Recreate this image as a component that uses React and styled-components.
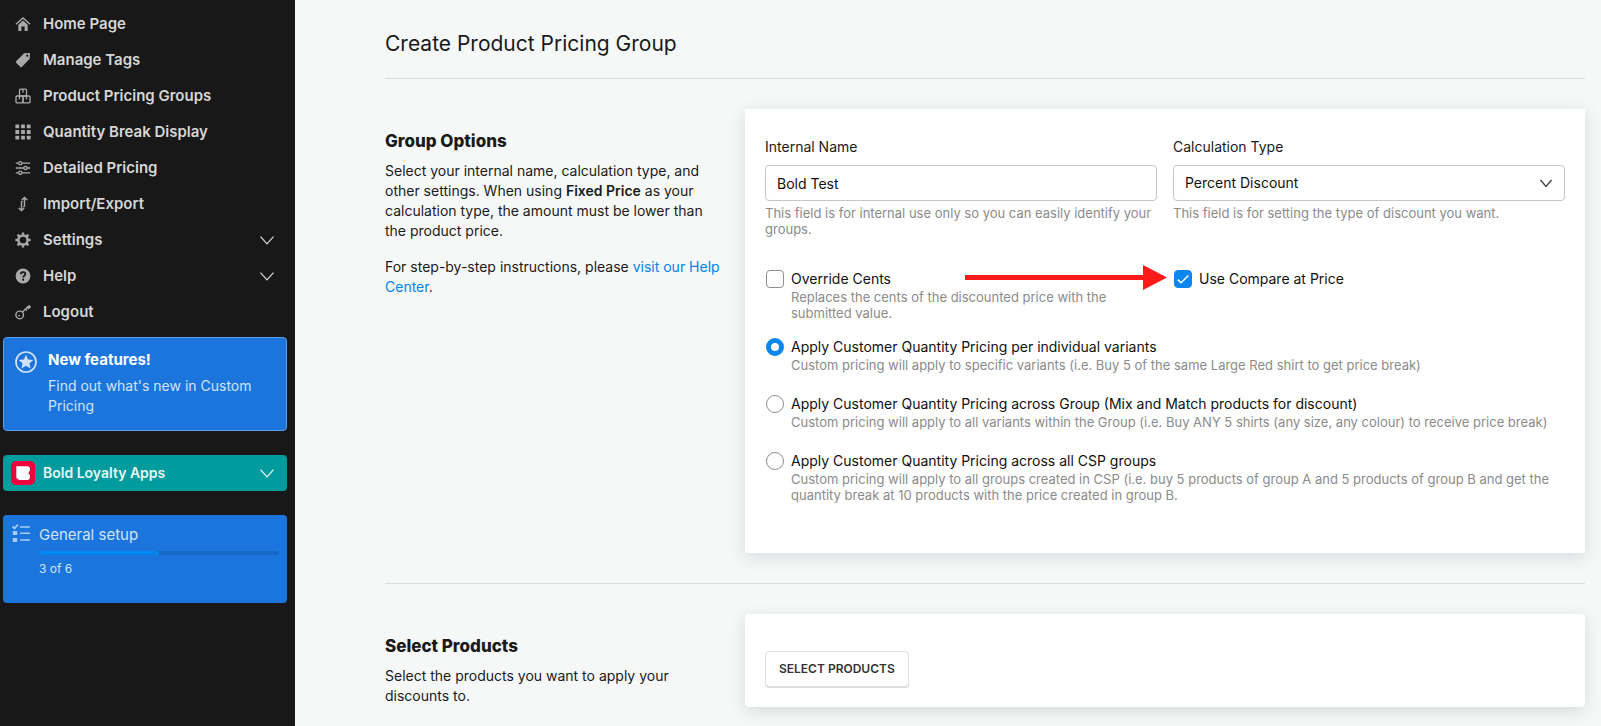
import React, { useState } from "react";
import styled, { createGlobalStyle } from "styled-components";

const GlobalStyle = createGlobalStyle`
  *, *::before, *::after { box-sizing: border-box; }
  body {
    margin: 0;
    background: #f6f8f8;
    color: #1a1a1a;
    font-family: Inter, "Liberation Sans", sans-serif;
    font-size: 14px;
    line-height: 20px;
  }
  h1, h2, p, ul { margin: 0; padding: 0; }
  button, input, select { font: inherit; color: inherit; }
`;

const Page = styled.div`
  display: flex;
  min-height: 100vh;
`;

/* Sidebar */

const Sidebar = styled.aside`
  flex: 0 0 295px;
  padding: 6px 8px 24px 3px;
  background: #181818;
`;

const NavList = styled.ul`
  list-style: none;
`;

const navRow = `
  display: flex;
  align-items: center;
  gap: 12px;
  width: 100%;
  height: 36px;
  padding: 0 13px 0 12px;
  border: 0;
  background: none;
  color: #d6d6d6;
  font-size: 15px;
  font-weight: 600;
  text-align: left;
  text-decoration: none;
  cursor: pointer;
`;

const NavLink = styled.a`${navRow}`;
const NavToggle = styled.button`${navRow}`;

const NavIcon = styled.svg`
  flex: none;
  width: 16px;
  height: 16px;
  fill: none;
  stroke: #a9a9a9;
  color: #a9a9a9;
`;

const ToggleLabel = styled.span`
  flex: 1;
`;

const ChevronSvg = styled.svg`
  flex: none;
  width: 14px;
  height: 9px;
  fill: none;
  stroke: currentColor;
`;

const Promo = styled.a`
  display: flex;
  gap: 11px;
  margin-top: 7px;
  padding: 12px 8px 14px 11px;
  border: 1px solid #5a9ce8;
  border-radius: 4px;
  background: #1b75dc;
  color: #d1e3f8;
  text-decoration: none;
`;

const PromoIcon = styled.svg`
  flex: none;
  width: 22px;
  height: 22px;
  margin-top: 1px;
`;

const PromoTitle = styled.strong`
  display: block;
  margin-bottom: 6px;
  color: #fff;
  font-size: 15px;
  font-weight: 700;
`;

const AppsToggle = styled.button`
  display: flex;
  align-items: center;
  gap: 8px;
  width: 100%;
  height: 36px;
  margin-top: 24px;
  padding: 0 13px 0 8px;
  border: 0;
  border-radius: 4px;
  background: #009b9c;
  color: #e8f6f6;
  font-size: 14px;
  font-weight: 600;
  text-align: left;
  cursor: pointer;
`;

const BoldLogo = styled.svg`
  flex: none;
  width: 24px;
  height: 24px;
`;

const Setup = styled.section`
  display: flex;
  gap: 9px;
  min-height: 88px;
  margin-top: 24px;
  padding: 8px 8px 8px 9px;
  border-radius: 4px;
  background: #1b75dc;
  color: #d1e3f8;
`;

const SetupIcon = styled.svg`
  flex: none;
  width: 18px;
  height: 20px;
`;

const SetupBody = styled.div`
  flex: 1;
  padding-top: 2px;
`;

const SetupTitle = styled.h2`
  font-size: 15px;
  font-weight: 400;
  line-height: 20px;
`;

const Track = styled.div`
  height: 4px;
  margin: 6px 0 4px;
  border-radius: 2px;
  background: #1668c4;
`;

const Fill = styled.div`
  height: 100%;
  border-radius: 2px;
  background: #0088f0;
`;

const SetupCount = styled.p`
  font-size: 12px;
`;

/* Main content */

const Main = styled.main`
  flex: 1;
  min-width: 0;
  padding: 0 16px 0 90px;
`;

const Header = styled.header`
  padding: 28px 0 18px;
`;

const Title = styled.h1`
  font-size: 21px;
  font-weight: 400;
  line-height: 32px;
`;

const Section = styled.section`
  display: grid;
  grid-template-columns: 3fr 7fr;
  align-items: start;
  padding: 30px 0;
  border-top: 1px solid #dcdfdf;
`;

const Intro = styled.div`
  display: grid;
  gap: 16px;
  padding: 20px 20px 0 0;
`;

const SectionTitle = styled.h2`
  margin-bottom: -8px;
  font-size: 17px;
  font-weight: 800;
  line-height: 24px;
`;

const Strong = styled.strong`
  font-weight: 600;
`;

const HelpLink = styled.a`
  color: #0084e8;
  text-decoration: none;
`;

const Card = styled.div`
  padding: ${(p) => (p.$compact ? "37px 20px 20px" : "28px 20px 50px")};
  border-radius: ${(p) => (p.$compact ? "4px" : "0")};
  background: #fff;
  box-shadow: 0 4px 16px rgba(30, 45, 45, 0.14);
`;

const FieldGrid = styled.div`
  display: grid;
  grid-template-columns: 1fr 1fr;
  gap: 31px 16px;
`;

const FieldLabel = styled.label`
  display: block;
  margin-bottom: 8px;
`;

const control = `
  display: block;
  width: 100%;
  height: 36px;
  padding: 0 11px;
  border: 1px solid #c4c6c8;
  border-radius: 4px;
  background: #fff;
  color: #111;
  appearance: none;
`;

const TextInput = styled.input`${control}`;
const Select = styled.select`${control}`;

const SelectWrap = styled.div`
  position: relative;
  color: #444;

  svg {
    position: absolute;
    top: 14px;
    right: 12px;
    pointer-events: none;
  }
`;

const Help = styled.p`
  margin-top: ${(p) => (p.$field ? "4px" : "0")};
  color: #8b8b8b;
  font-size: 13px;
  line-height: 16px;
`;

const Option = styled.div`
  position: relative;
  display: grid;
  grid-template-columns: 18px 1fr;
  grid-template-rows: 21px auto;
  column-gap: 7px;
  padding-left: 1px;

  & > label { line-height: 22px; color: #111; }
  & > p { grid-column: 2; }
`;

const Mark = styled.span`
  display: grid;
  margin-top: 2px;
  height: 18px;

  & > * { grid-area: 1 / 1; }
  & > svg { pointer-events: none; }
`;

const Tick = styled.input`
  appearance: none;
  width: 18px;
  height: 18px;
  margin: 0;
  border: 1px solid #8f8f8f;
  border-radius: 4px;
  background: #fff;

  &:checked { border-color: #0a86ec; background: #0a86ec; }
`;

const Radio = styled(Tick)`
  border-radius: 50%;

  &:checked { border: 5px solid #0a86ec; background: #fff; }
`;

const RadioList = styled.div`
  display: grid;
  gap: 20px;
  margin-top: 15px;
`;

const Arrow = styled.svg`
  position: absolute;
  top: -3px;
  right: calc(100% + 6px);
  width: 202px;
  height: 25px;
`;

const OutlineButton = styled.button`
  display: block;
  height: 36px;
  padding: 0 13px;
  border: 1px solid #e0e0e0;
  border-radius: 4px;
  box-shadow: 0 1px 0 #dcdcdc;
  background: #fff;
  color: #333;
  font-size: 12px;
  font-weight: 600;
  text-transform: uppercase;
  cursor: pointer;
`;

const icons = {
  home: (
    <>
      <path d="M1 8.3 8 2l7 6.3" strokeWidth="1.5" />
      <path d="M3.3 8.7 8 4.6l4.7 4.1V15H9.6v-4.4H6.4V15H3.3z" fill="currentColor" stroke="none" />
    </>
  ),
  tag: (
    <path
      fill="currentColor"
      stroke="none"
      fillRule="evenodd"
      d="M9.2 1.3 14 .9c.6 0 1 .4 1 1l-.3 4.9L6.8 15a1 1 0 0 1-1.4 0L1.1 10.7a1 1 0 0 1 0-1.4zM12.3 2.6a1.1 1.1 0 1 0 0 2.2 1.1 1.1 0 0 0 0-2.2z"
    />
  ),
  boxes: (
    <g strokeWidth="1.3">
      <rect x="4.5" y="1.1" width="7" height="6.9" rx="1" />
      <rect x="1" y="8" width="7" height="6.9" rx="1" />
      <rect x="8" y="8" width="7" height="6.9" rx="1" />
      <path d="M8 1.1v3.4M4.5 8v3.2M11.5 8v3.2" />
    </g>
  ),
  grid: (
    <g fill="currentColor" stroke="none">
      {[0.4, 6.1, 11.8].map((y) =>
        [0.4, 6.1, 11.8].map((x) => <rect key={`${x}-${y}`} x={x} y={y} width="3.8" height="3.8" rx="0.5" />)
      )}
    </g>
  ),
  sliders: (
    <g strokeWidth="1.3">
      <path d="M.8 3.2h3M6.8 3.200h8.400M.8 8h8.200M12 8h3.200M.8 12.800h3M6.800 12.800h8.400" />
      <circle cx="5.3" cy="3.2" r="1.6" />
      <circle cx="10.5" cy="8" r="1.6" />
      <circle cx="5.3" cy="12.8" r="1.6" />
    </g>
  ),
  swap: (
    <path
      strokeWidth="1.4"
      d="M9.5 10.8V1.4M6.8 4.1l2.7-2.7 2.800 2.700M6.500 5.200v9.400M3.700 11.900l2.800 2.700 2.700-2.700M9.500 10.500H8.200M6.500 5.500h1.300"
    />
  ),
  gear: (
    <g>
      <circle cx="8" cy="8" r="4.6" strokeWidth="2.5" />
      <path
        strokeWidth="2.4"
        d="M8 .4v2.4M8 13.200v2.400M.4 8h2.400M13.200 8h2.400M2.600 2.600l1.700 1.700M11.700 11.700l1.700 1.700M2.600 13.400l1.700-1.700M11.700 4.300l1.700-1.700"
      />
    </g>
  ),
  help: (
    <>
      <circle cx="8" cy="8" r="7.4" fill="currentColor" stroke="none" />
      <path
        d="M5.8 6.3c0-1.3 1-2.1 2.3-2.1s2.200.8 2.200 1.900c0 1.600-2.200 1.700-2.200 3.300"
        stroke="#181818"
        strokeWidth="1.8"
      />
      <circle cx="8.1" cy="11.7" r="1.1" fill="#181818" stroke="none" />
    </>
  ),
  key: (
    <g strokeWidth="1.4">
      <circle cx="4.7" cy="10.9" r="3.8" />
      <path d="M7.3 8.200 13 2.600M10.600 5l1.500 1.500M12.500 3.200l1 1.200 1.700-1.400-1.100-1.300z" />
      <circle cx="4" cy="11.6" r="0.9" fill="currentColor" stroke="none" />
    </g>
  ),
};

const Icon = ({ name }) => (
  <NavIcon viewBox="0 0 16 16" aria-hidden="true">
    {icons[name]}
  </NavIcon>
);

const Chevron = () => (
  <ChevronSvg viewBox="0 0 14 9" aria-hidden="true">
    <path d="m.5.6 6.5 7.3L13.5.6" strokeWidth="1.2" />
  </ChevronSvg>
);

const SmallChevron = () => (
  <ChevronSvg viewBox="0 0 14 9" aria-hidden="true">
    <path d="m1.5 1 5.5 6.5L12.5 1" strokeWidth="1.4" />
  </ChevronSvg>
);

const NAV = [
  { icon: "home", label: "Home Page" },
  { icon: "tag", label: "Manage Tags" },
  { icon: "boxes", label: "Product Pricing Groups" },
  { icon: "grid", label: "Quantity Break Display" },
  { icon: "sliders", label: "Detailed Pricing" },
  { icon: "swap", label: "Import/Export" },
  { icon: "gear", label: "Settings", expands: true },
  { icon: "help", label: "Help", expands: true },
  { icon: "key", label: "Logout" },
];

const SCOPES = [
  {
    id: "variants",
    label: "Apply Customer Quantity Pricing per individual variants",
    help: "Custom pricing will apply to specific variants (i.e. Buy 5 of the same Large Red shirt to get price break)",
  },
  {
    id: "group",
    label: "Apply Customer Quantity Pricing across Group (Mix and Match products for discount)",
    help: "Custom pricing will apply to all variants within the Group (i.e. Buy ANY 5 shirts (any size, any colour) to receive price break)",
  },
  {
    id: "all",
    label: "Apply Customer Quantity Pricing across all CSP groups",
    help: "Custom pricing will apply to all groups created in CSP (i.e. buy 5 products of group A and 5 products of group B and get the quantity break at 10 products with the price created in group B.",
  },
];

const SETUP = { done: 3, total: 6 };

function SideMenu() {
  return (
    <Sidebar>
      <nav>
        <NavList>
          {NAV.map((item) => (
            <li key={item.label}>
              {item.expands ? (
                <NavToggle type="button" aria-expanded="false">
                  <Icon name={item.icon} />
                  <ToggleLabel>{item.label}</ToggleLabel>
                  <Chevron />
                </NavToggle>
              ) : (
                <NavLink href="#">
                  <Icon name={item.icon} />
                  {item.label}
                </NavLink>
              )}
            </li>
          ))}
        </NavList>
      </nav>

      <Promo href="#">
        <PromoIcon viewBox="0 0 22 22" aria-hidden="true">
          <circle cx="11" cy="11" r="10" fill="none" stroke="#d1e3f8" strokeWidth="1.7" />
          <path
            fill="#d1e3f8"
            d="m11 3.8 2.1 4.7 5.1.5-3.8 3.4 1.100 5-4.500-2.600-4.500 2.600 1.100-5L3.800 9l5.100-.5z"
          />
        </PromoIcon>
        <div>
          <PromoTitle>New features!</PromoTitle>
          <p>Find out what's new in Custom Pricing</p>
        </div>
      </Promo>

      <AppsToggle type="button" aria-expanded="false">
        <BoldLogo viewBox="0 0 24 24" aria-hidden="true">
          <rect width="24" height="24" rx="5" fill="#ee003f" />
          <path
            fill="#fff"
            d="M5.300 5.200h11.400a2.400 2.400 0 0 1 2.300 2.400v1.900L17.300 12l1.700 2.500v2a2.400 2.400 0 0 1-2.400 2.400H8L5.300 16.800z"
          />
        </BoldLogo>
        <ToggleLabel>Bold Loyalty Apps</ToggleLabel>
        <Chevron />
      </AppsToggle>

      <Setup>
        <SetupIcon viewBox="0 0 18 20" aria-hidden="true">
          <path d="m.5 3.5 2 2L6 1.500" fill="none" stroke="#a9cbf3" strokeWidth="1.8" />
          <path d="M.8 8.100h4.400v4H.8zM.8 15h4.400v4H.8z" fill="#a9cbf3" />
          <path d="M8 4h10M8 10.200h10M8 17h10" stroke="#a9cbf3" strokeWidth="1.6" />
        </SetupIcon>
        <SetupBody>
          <SetupTitle>General setup</SetupTitle>
          <Track role="progressbar" aria-valuenow={SETUP.done} aria-valuemin={0} aria-valuemax={SETUP.total}>
            <Fill style={{ width: `${(SETUP.done / SETUP.total) * 100}%` }} />
          </Track>
          <SetupCount>
            {SETUP.done} of {SETUP.total}
          </SetupCount>
        </SetupBody>
      </Setup>
    </Sidebar>
  );
}

function CheckOption({ id, label, help, checked, onChange, children }) {
  return (
    <Option>
      <Mark>
        <Tick type="checkbox" id={id} checked={checked} onChange={(e) => onChange(e.target.checked)} />
        {checked && (
          <svg width="18" height="18" viewBox="0 0 18 18" aria-hidden="true">
            <path d="m3.8 9.6 3.3 3.2 7.3-7.3" fill="none" stroke="#fff" strokeWidth="1.5" />
          </svg>
        )}
      </Mark>
      <label htmlFor={id}>{label}</label>
      {help && <Help>{help}</Help>}
      {children}
    </Option>
  );
}

export default function App() {
  const [name, setName] = useState("Bold Test");
  const [override, setOverride] = useState(false);
  const [compare, setCompare] = useState(true);
  const [scope, setScope] = useState("variants");

  return (
    <>
      <GlobalStyle />
      <Page>
        <SideMenu />
        <Main>
          <Header>
            <Title>Create Product Pricing Group</Title>
          </Header>

          <Section>
            <Intro>
              <SectionTitle>Group Options</SectionTitle>
              <p>
                Select your internal name, calculation type, and other settings. When using{" "}
                <Strong>Fixed Price</Strong> as your calculation type, the amount must be lower than the product price.
              </p>
              <p>
                For step-by-step instructions, please <HelpLink href="#">visit our Help Center</HelpLink>.
              </p>
            </Intro>
            <Card>
              <FieldGrid>
                <div>
                  <FieldLabel htmlFor="name">Internal Name</FieldLabel>
                  <TextInput id="name" type="text" value={name} onChange={(e) => setName(e.target.value)} />
                  <Help $field>This field is for internal use only so you can easily identify your groups.</Help>
                </div>
                <div>
                  <FieldLabel htmlFor="type">Calculation Type</FieldLabel>
                  <SelectWrap>
                    <Select id="type" defaultValue="percent">
                      <option value="percent">Percent Discount</option>
                      <option value="fixed">Fixed Price</option>
                    </Select>
                    <SmallChevron />
                  </SelectWrap>
                  <Help $field>This field is for setting the type of discount you want.</Help>
                </div>
                <CheckOption
                  id="override"
                  label="Override Cents"
                  help="Replaces the cents of the discounted price with the submitted value."
                  checked={override}
                  onChange={setOverride}
                />
                <CheckOption id="compare" label="Use Compare at Price" checked={compare} onChange={setCompare}>
                  <Arrow viewBox="0 0 202 25" aria-hidden="true">
                    <path d="M0 10h178V0l24 12.5L178 25V15H0z" fill="#ff1a1a" />
                  </Arrow>
                </CheckOption>
              </FieldGrid>
              <RadioList role="radiogroup" aria-label="Quantity pricing scope">
                {SCOPES.map((s) => (
                  <Option key={s.id}>
                    <Mark>
                      <Radio
                        type="radio"
                        name="scope"
                        id={s.id}
                        checked={scope === s.id}
                        onChange={() => setScope(s.id)}
                      />
                    </Mark>
                    <label htmlFor={s.id}>{s.label}</label>
                    <Help>{s.help}</Help>
                  </Option>
                ))}
              </RadioList>
            </Card>
          </Section>

          <Section>
            <Intro>
              <SectionTitle>Select Products</SectionTitle>
              <p>Select the products you want to apply your discounts to.</p>
            </Intro>
            <Card $compact>
              <OutlineButton type="button">Select Products</OutlineButton>
            </Card>
          </Section>
        </Main>
      </Page>
    </>
  );
}
